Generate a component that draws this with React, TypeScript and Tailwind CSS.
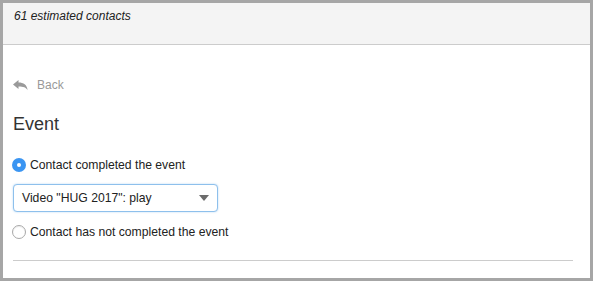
import * as React from "react";

function ReplyIcon() {
  return (
    <svg width="15" height="11" viewBox="0 0 15 11" className="shrink-0">
      <path
        d="M0 4.5 L5.5 0 L5.5 2.6 C10.5 2.6 14 4.8 14.6 10.2 C13 7.4 10.4 6.4 5.5 6.4 L5.5 9 Z"
        fill="#9a9a9a"
      />
    </svg>
  );
}

function Radio({ checked, label }: { checked?: boolean; label: string }) {
  return (
    <label className="-ml-px flex h-4 items-center gap-[4px]">
      {checked ? (
        <span className="flex size-[14px] items-center justify-center rounded-full bg-[#3a95f2]">
          <span className="size-[4px] rounded-full bg-white" />
        </span>
      ) : (
        <span className="size-[14px] rounded-full border border-[#a9a9a9] bg-white shadow-[inset_0_1px_1px_rgba(0,0,0,0.08)]" />
      )}
      <span className="text-[12.2px] text-[#222]">{label}</span>
    </label>
  );
}

export default function App() {
  return (
    <div className="h-[281px] w-[593px] border-[3px] border-[#a6a6a6] bg-white font-['Liberation_Sans',Arial,sans-serif]">
      {/* header */}
      <div className="h-[42px] border-b border-[#cccccc] bg-[#f4f4f4] px-[11px] pt-[6px]">
        <p className="text-[12px] italic leading-[14px] text-[#222]">61 estimated contacts</p>
      </div>

      <div className="pl-[10px] pr-[17px]">
        <div className="mt-[32px] flex h-4 items-center gap-[9px] text-[12px] text-[#999]">
          <ReplyIcon />
          <span>Back</span>
        </div>

        <h2 className="mt-[21px] text-[18px] leading-5 text-[#333]">Event</h2>

        <div className="mt-[23px]">
          <Radio checked label="Contact completed the event" />
        </div>

        <div className="mt-[11px] flex h-[28px] w-[205px] items-center justify-between rounded-[4px] border border-[#8ec0ec] bg-white pl-[8px] pr-[8px] shadow-[0_0_2px_rgba(82,160,230,0.45)]">
          <span className="text-[12.2px] text-[#222]">Video "HUG 2017": play</span>
          <svg width="10" height="6" viewBox="0 0 10 6">
            <path d="M0 0 L10 0 L5 6 Z" fill="#6b6b6b" />
          </svg>
        </div>

        <div className="mt-[12px]">
          <Radio label="Contact has not completed the event" />
        </div>

        <div className="mt-[20px] h-px bg-[#cccccc]" />
      </div>
    </div>
  );
}
